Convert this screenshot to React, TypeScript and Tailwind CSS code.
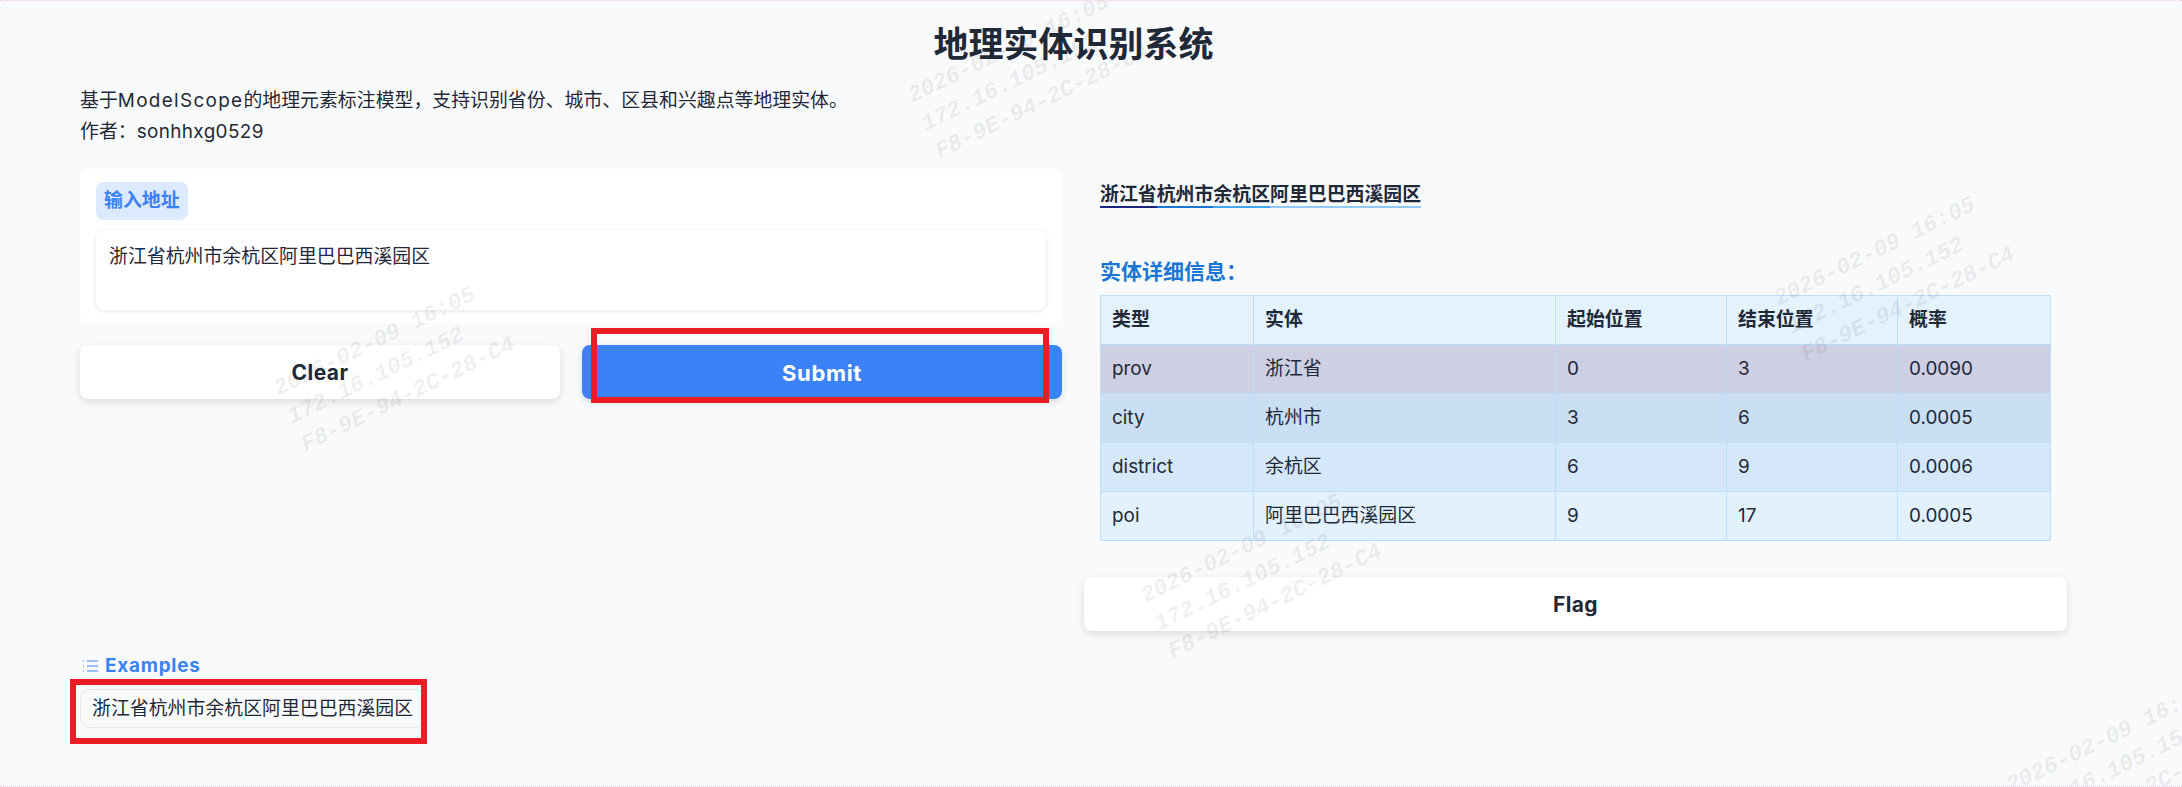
const FONT = "font-['Inter','Noto_Sans_CJK_SC',sans-serif]";

const COLUMNS = ['类型', '实体', '起始位置', '结束位置', '概率'];

const ROWS = [
  { cells: ['prov', '浙江省', '0', '3', '0.0090'], bg: 'bg-[#cecfe3]' },
  { cells: ['city', '杭州市', '3', '6', '0.0005'], bg: 'bg-[#cbdff4]' },
  { cells: ['district', '余杭区', '6', '9', '0.0006'], bg: 'bg-[#d4e8fa]' },
  { cells: ['poi', '阿里巴巴西溪园区', '9', '17', '0.0005'], bg: 'bg-[#e3f0fd]' },
];

const ENTITIES = [
  { text: '浙江省', border: 'border-[#1a237e]' },
  { text: '杭州市', border: 'border-[#1976d2]' },
  { text: '余杭区', border: 'border-[#42a5f5]' },
  { text: '阿里巴巴西溪园区', border: 'border-[#90caf9]' },
];

const WATERMARKS = [
  'left-[903px] top-[97px]',
  'left-[269px] top-[390px]',
  'left-[1769px] top-[300px]',
  'left-[1136px] top-[597px]',
  'left-[2001px] top-[787px]',
];

function Watermark({ place }: { place: string }) {
  return (
    <div
      className={`absolute ${place} pointer-events-none origin-top-left rotate-[-26deg] -translate-y-[14px] whitespace-pre font-['Liberation_Mono',monospace] text-[23px] leading-[31px] font-bold italic text-black/[0.08]`}
    >
      <div>2026-02-09 16:05</div>
      <div>172.16.105.152</div>
      <div>F8-9E-94-2C-28-C4</div>
    </div>
  );
}

function ListIcon() {
  return (
    <svg width="16" height="14" viewBox="0 0 16 14" fill="none" stroke="#3b82f6" strokeWidth="1">
      <path d="M1 2h1M1 7h1M1 12h1" />
      <path d="M5 2h11M5 7h11M5 12h11" />
    </svg>
  );
}

export default function App() {
  return (
    <div className={`relative min-h-screen overflow-hidden border-y border-dotted border-[#f3c4ee] bg-[#f9fafc] text-[#1f2937] ${FONT}`}>
      <div className="pt-[19px]">
        <h1 className="pr-[35px] text-center text-[35px] leading-[48px] font-bold">地理实体识别系统</h1>

        <div className="mt-[17px] px-20 text-[18.9px] leading-[31px]">
          <p>
            基于<span className="tracking-[0.07em]">ModelScope</span>的地理元素标注模型，支持识别省份、城市、区县和兴趣点等地理实体。
          </p>
          <p>
            作者：<span className="tracking-[0.02em]">sonhhxg0529</span>
          </p>
        </div>

        <div className="mt-[22px] flex gap-[22px] pl-20">
          <div className="w-[982px]">
            <div className="rounded-lg bg-white px-4 pt-[13px] pb-[13px]">
              <span className="block w-fit rounded-lg bg-[#dbeafe] px-2 text-[18.9px] leading-[38px] font-bold text-[#3b82f6]">
                输入地址
              </span>
              <div className="mt-[10px] h-20 rounded-lg bg-white px-[13px] pt-3 text-[18.9px] leading-[30px] shadow-[0_1px_4px_rgba(0,0,0,0.12)]">
                浙江省杭州市余杭区阿里巴巴西溪园区
              </div>
            </div>

            <div className="mt-[22px] flex gap-[22px]">
              <button className="h-[54px] w-[480px] rounded-lg bg-white pt-[2px] text-[21px] font-bold tracking-[0.02em] shadow-[0_3px_8px_rgba(0,0,0,0.12)]">
                Clear
              </button>
              <div className="relative flex-1">
                <button className="h-[54px] w-full rounded-lg bg-[#3b82f6] pt-[2px] text-[22px] font-bold tracking-[0.03em] text-white shadow-[0_3px_8px_rgba(0,0,0,0.12)]">
                  Submit
                </button>
                <div className="pointer-events-none absolute -top-[17px] right-[13px] -bottom-[4px] left-[9px] border-[6px] border-[#ec1c24]" />
              </div>
            </div>

            <div className="mt-[255px] flex items-center gap-[7px] pl-[2px] text-[18.9px] leading-[24px] font-bold tracking-[0.04em] text-[#3b82f6]">
              <ListIcon />
              <span>Examples</span>
            </div>
            <div className="relative mt-[11px] w-[345px]">
              <button className="block h-[39px] w-full rounded-[10px] border border-[#e5e7eb] bg-[#f9fafb] pl-[11px] text-left text-[18.9px] leading-[37px]">
                浙江省杭州市余杭区阿里巴巴西溪园区
              </button>
              <div className="pointer-events-none absolute -top-[10px] -right-[2px] -bottom-[16px] -left-[10px] border-[6px] border-[#ec1c24]" />
            </div>
          </div>

          <div className="w-[983px]">
            <div className="flex px-4 pt-[14px]">
              {ENTITIES.map(e => (
                <span key={e.text} className={`border-b-2 ${e.border} text-[18.9px] leading-[23px] font-bold`}>
                  {e.text}
                </span>
              ))}
            </div>

            <h3 className="mt-[51px] px-4 text-[21px] leading-[26px] font-bold text-[#1976d2]">实体详细信息：</h3>

            <div className="mt-[10px] px-4">
              <table className="w-[950px] table-fixed border-collapse border border-[#bbdefb] text-[18.9px]">
                <colgroup>
                  <col className="w-[153px]" />
                  <col className="w-[302px]" />
                  <col className="w-[171px]" />
                  <col className="w-[171px]" />
                  <col className="w-[153px]" />
                </colgroup>
                <thead>
                  <tr className="h-[49px] bg-[#e3f2fd]">
                    {COLUMNS.map(c => (
                      <th key={c} className="border border-[#bbdefb] px-[11px] text-left font-bold">
                        {c}
                      </th>
                    ))}
                  </tr>
                </thead>
                <tbody>
                  {ROWS.map(row => (
                    <tr key={row.cells[0]} className={`h-[49px] ${row.bg}`}>
                      {row.cells.map((cell, i) => (
                        <td key={i} className="border border-[#bbdefb] px-[11px]">
                          {cell}
                        </td>
                      ))}
                    </tr>
                  ))}
                </tbody>
              </table>
            </div>

            <button className="mt-9 h-[54px] w-full rounded-lg bg-white pt-[2px] text-[21px] font-bold tracking-[0.02em] shadow-[0_3px_8px_rgba(0,0,0,0.12)]">
              Flag
            </button>
          </div>
        </div>
      </div>

      {WATERMARKS.map(place => (
        <Watermark key={place} place={place} />
      ))}
    </div>
  );
}
